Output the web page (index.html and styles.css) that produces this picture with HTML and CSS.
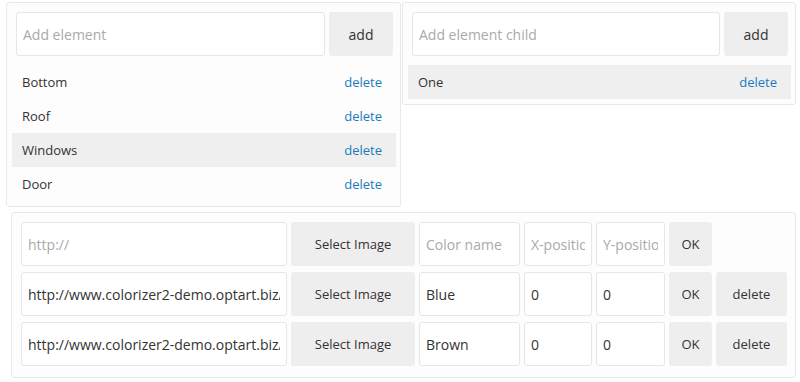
FILE: index.html
```html
<!DOCTYPE html>
<html lang="en">
  <head>
    <meta charset="UTF-8" />
    <meta name="viewport" content="width=device-width, initial-scale=1.0" />
    <title>Colorizer</title>
    <link rel="stylesheet" href="styles.css">
  </head>
  <body>
    <div class="top">
      <div class="panel elements">
        <div class="add-form">
          <input type="text" placeholder="Add element">
          <button>add</button>
        </div>
        <ul class="list">
          <li><span>Bottom</span><a>delete</a></li>
          <li><span>Roof</span><a>delete</a></li>
          <li class="active"><span>Windows</span><a>delete</a></li>
          <li><span>Door</span><a>delete</a></li>
        </ul>
      </div>
      <div class="panel children">
        <div class="add-form">
          <input type="text" placeholder="Add element child">
          <button>add</button>
        </div>
        <ul class="list">
          <li class="active"><span>One</span><a>delete</a></li>
        </ul>
      </div>
    </div>
    <div class="panel images">
      <div class="img-row">
        <input class="url" type="text" placeholder="http://">
        <button class="select">Select Image</button>
        <input class="color" type="text" placeholder="Color name">
        <input class="pos" type="text" placeholder="X-position">
        <input class="pos pos-y" type="text" placeholder="Y-position">
        <button class="ok">OK</button>
      </div>
      <div class="img-row">
        <input class="url" type="text" value="http://www.colorizer2-demo.optart.biz/images/blue.png">
        <button class="select">Select Image</button>
        <input class="color" type="text" value="Blue">
        <input class="pos" type="text" value="0">
        <input class="pos pos-y" type="text" value="0">
        <button class="ok">OK</button>
        <button class="del">delete</button>
      </div>
      <div class="img-row">
        <input class="url" type="text" value="http://www.colorizer2-demo.optart.biz/images/brown.png">
        <button class="select">Select Image</button>
        <input class="color" type="text" value="Brown">
        <input class="pos" type="text" value="0">
        <input class="pos pos-y" type="text" value="0">
        <button class="ok">OK</button>
        <button class="del">delete</button>
      </div>
    </div>
  </body>
</html>
```

FILE: styles.css
```css
body {
  margin: 0;
  font-family: "Open Sans", sans-serif;
  color: #333;
  background-color: white;
}
.top {
  display: flex;
  align-items: flex-start;
  gap: 1px;
  margin: 2px 0 0 6px;
}
.panel {
  box-sizing: border-box;
  border: 1px solid #e9e9e9;
  border-radius: 3px;
  background-color: #fdfdfd;
}
.elements {
  width: 395px;
  padding: 5px 4px 5px 5px;
}
.children {
  width: 394px;
  padding: 5px 4px 5px 5px;
}
.add-form {
  display: flex;
  gap: 4px;
  padding: 4px 3px 9px 4px;
}
input {
  box-sizing: border-box;
  height: 44px;
  border: 1px solid #e6e6e6;
  border-radius: 3px;
  padding: 0 6px;
  font-family: "Open Sans", sans-serif;
  font-size: 14px;
  color: #333;
  background-color: white;
  outline: none;
  min-width: 0;
}
input::placeholder {
  color: #aaa;
}
.add-form input {
  flex: 1;
}
button {
  box-sizing: border-box;
  height: 44px;
  border: none;
  border-radius: 3px;
  background-color: #eee;
  color: #333;
  font-family: "Open Sans", sans-serif;
  font-size: 13px;
  padding: 0;
  cursor: pointer;
}
.add-form button {
  width: 64px;
  font-size: 14px;
}
.list {
  list-style-type: none;
  margin: 0;
  padding: 0;
}
.list li {
  display: flex;
  justify-content: space-between;
  align-items: center;
  height: 34px;
  padding: 0 14px 0 10px;
  font-size: 13px;
}
.list li.active {
  background-color: #efefef;
}
.list a {
  color: #1a7bbf;
  cursor: pointer;
}
.images {
  width: 785px;
  margin: 5px 0 0 11px;
  padding: 9px 8px 11px 9px;
  display: flex;
  flex-direction: column;
  gap: 6px;
}
.img-row {
  display: flex;
  gap: 4px;
}
.img-row > * {
  flex-shrink: 0;
}
.url {
  width: 266px;
}
.select {
  width: 124px;
}
.color {
  width: 101px;
}
.pos {
  width: 68px;
}
.pos-y {
  width: 69px;
}
.ok {
  width: 43px;
}
.del {
  width: 71px;
}
```
